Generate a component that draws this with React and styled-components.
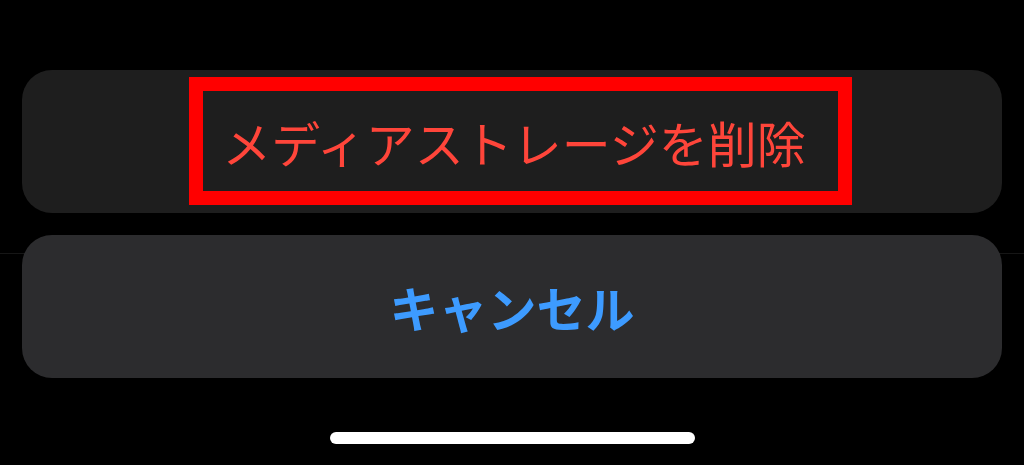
import React from "react";
import styled, { createGlobalStyle } from "styled-components";

const Global = createGlobalStyle`
  html, body { margin: 0; padding: 0; background: #000; }
  body { font-family: "Noto Sans CJK JP", "Noto Sans", sans-serif; }
`;

const Page = styled.div`
  width: 1024px;
  height: 465px;
  box-sizing: border-box;
  padding: 70px 22px 0 22px;
  display: flex;
  flex-direction: column;
  background-color: #000;
  background-image: linear-gradient(
    to bottom,
    transparent 253px,
    #161616 253px,
    #161616 254px,
    transparent 254px
  );
  overflow: hidden;
`;

const Card = styled.div`
  position: relative;
  height: 143px;
  border-radius: 30px;
  background: ${(p) => p.$bg};
  display: flex;
  align-items: center;
  justify-content: center;
  & + & {
    margin-top: 22px;
  }
`;

const Label = styled.span`
  font-size: ${(p) => p.$size}px;
  line-height: 1;
  color: ${(p) => p.$color};
  font-weight: ${(p) => (p.$bold ? 700 : 400)};
  letter-spacing: 0;
  transform: translate(${(p) => p.$dx || 0}px, ${(p) => p.$dy || 0}px);
`;

const Highlight = styled.div`
  position: absolute;
  left: 167px;
  top: 7px;
  width: 663px;
  height: 128px;
  box-sizing: border-box;
  border: 14px solid #ff0000;
  pointer-events: none;
`;

const HomeIndicator = styled.div`
  align-self: center;
  margin-top: 54px;
  margin-left: 1px;
  width: 365px;
  height: 12px;
  border-radius: 6px;
  background: #ffffff;
`;

export default function App() {
  return (
    <>
      <Global />
      <Page>
        <Card $bg="#1e1e1e">
          <Label $size={49} $color="#ff453a" $dx={2}>メディアストレージを削除</Label>
          <Highlight />
        </Card>
        <Card $bg="#2c2c2e">
          <Label $size={49} $color="#3d9bff" $bold $dx={0}>キャンセル</Label>
        </Card>
        <HomeIndicator />
      </Page>
    </>
  );
}
